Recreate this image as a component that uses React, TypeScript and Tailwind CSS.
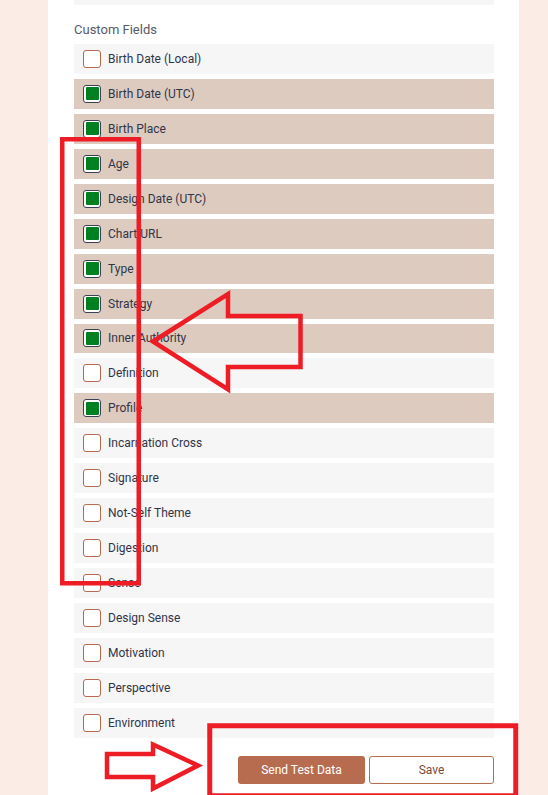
import React from "react";

const fields: [string, boolean][] = [
  ["Birth Date (Local)", false],
  ["Birth Date (UTC)", true],
  ["Birth Place", true],
  ["Age", true],
  ["Design Date (UTC)", true],
  ["Chart URL", true],
  ["Type", true],
  ["Strategy", true],
  ["Inner Authority", true],
  ["Definition", false],
  ["Profile", true],
  ["Incarnation Cross", false],
  ["Signature", false],
  ["Not-Self Theme", false],
  ["Digestion", false],
  ["Sense", false],
  ["Design Sense", false],
  ["Motivation", false],
  ["Perspective", false],
  ["Environment", false],
];

function Row({ label, checked }: { label: string; checked: boolean }) {
  return (
    <div
      className={`h-[29.95px] flex items-center pl-[9px] ${checked ? "bg-[#ddcbbf]" : "bg-[#f6f6f6]"}`}
    >
      {checked ? (
        <div className="w-[18px] h-[18px] rounded-[3px] border-[1.5px] border-[#3c4152] bg-white p-[1.5px]">
          <div className="w-full h-full bg-[#008020] rounded-[1px]" />
        </div>
      ) : (
        <div className="w-[18px] h-[18px] rounded-[3px] border-[1.5px] border-[#b86c4f] bg-white" />
      )}
      <span className="ml-[7px] text-[12px] leading-[14px] text-[#30354a]">{label}</span>
    </div>
  );
}

export default function App() {
  return (
    <div
      className="relative w-[548px] h-[795px] overflow-hidden bg-[#fbede5]"
      style={{ fontFamily: "Roboto, 'Liberation Sans', sans-serif" }}
    >
      <div className="ml-[48px] w-[471px] h-full bg-white pl-[26px] pr-[25px] flex flex-col">
        <div className="h-[5px] bg-[#f6f6f6]" />
        <div className="mt-[16px] mb-[5px] text-[13px] leading-[18px] text-[#565a6a]">Custom Fields</div>
        <div className="flex flex-col gap-[5px]">
          {fields.map(([l, c]) => (
            <Row key={l} label={l} checked={c} />
          ))}
        </div>
        <div className="mt-[18px] flex justify-end gap-[4px]">
          <button className="w-[127px] h-[28px] rounded-[3px] bg-[#b86c4f] text-white text-[12px] leading-[28px]">
            Send Test Data
          </button>
          <button className="w-[125px] h-[28px] rounded-[3px] border border-[#b86c4f] bg-white text-[#7a4a3a] text-[12px]">
            Save
          </button>
        </div>
      </div>
      <svg
        className="absolute inset-0 pointer-events-none"
        width="548"
        height="795"
        viewBox="0 0 548 795"
      >
        <g fill="none" stroke="#ee1c25" strokeWidth="4.5" strokeLinejoin="miter">
          <rect x="62.25" y="139.25" width="76.5" height="444" />
          <polygon points="153,341.5 228,294 228,316 300.5,316 300.5,367 228,367 228,389.5" />
          <polygon points="107,754 153,754 153,744.5 198,765.5 153,788.5 153,777 107,777" />
        </g>
        <rect x="209.75" y="725.75" width="306" height="70" fill="none" stroke="#ee1c25" strokeWidth="5" />
      </svg>
    </div>
  );
}
